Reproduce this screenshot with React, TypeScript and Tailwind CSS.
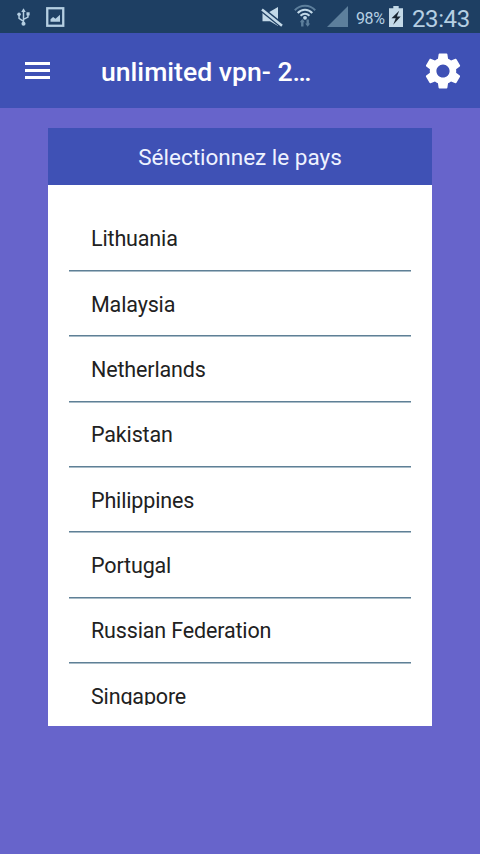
import { MdSettings } from "react-icons/md";

const countries = [
  "Lithuania",
  "Malaysia",
  "Netherlands",
  "Pakistan",
  "Philippines",
  "Portugal",
  "Russian Federation",
  "Singapore",
];

function UsbIcon() {
  return (
    <svg width="13" height="18" viewBox="0 0 14 19" fill="none" stroke="#b5cfe2" strokeWidth="1.6">
      <path d="M7 3v14M7 14.2 2.2 11V7M7 12l4.8-2.4V6" />
      <path d="M7 0 9.400 4H4.600z" fill="#b5cfe2" stroke="none" />
      <circle cx="2.2" cy="6.6" r="1.9" fill="#b5cfe2" stroke="none" />
      <path d="M10.2 4.4h3.4v3.4h-3.4z" fill="#b5cfe2" stroke="none" />
      <circle cx="7" cy="16.800" r="2.200" fill="#b5cfe2" stroke="none" />
    </svg>
  );
}

function PictureIcon() {
  return (
    <svg width="19" height="20" viewBox="0 0 19 20">
      <rect x="1.250" y="1.250" width="16" height="17.500" fill="none" stroke="#b5cfe2" strokeWidth="2.300" />
      <path d="M4.500 14.800v-2.600l2.600-2.200 2.400 1.800L14 7.800v7z" fill="#b5cfe2" />
    </svg>
  );
}

function MuteIcon() {
  return (
    <svg width="22" height="20" viewBox="0 0 22 20">
      <path d="M1.500 5.500h6L17 0v19l-8-4.800H1.500z" fill="#c3d9e8" />
      <path d="M0 1.700 21.500 19" stroke="#1e3f63" strokeWidth="5.200" />
      <path d="M1 2.500 21 18.800" stroke="#c3d9e8" strokeWidth="2.500" />
    </svg>
  );
}

function WifiIcon() {
  return (
    <svg width="22" height="23" viewBox="0 0 22 23" fill="none" strokeWidth="2">
      <path d="M.8 6.200C6.500.2 15.500.2 21.200 6.200" stroke="#5d7f9c" />
      <path d="M3.700 9C8 4.600 14 4.600 18.300 9" stroke="#c3d9e8" />
      <path d="M6.500 11.800c2.800-2.600 6.200-2.600 9 0" stroke="#c3d9e8" />
      <circle cx="11" cy="13.800" r="1.900" fill="#c3d9e8" />
      <path d="M8.300 22.500v-6M13.700 15.500v5" stroke="#5d7f9c" strokeWidth="2.400" />
      <path d="M5.800 18.300 8.300 15l2.500 3.300zM11.200 19.500h5l-2.500 3.300z" fill="#5d7f9c" />
    </svg>
  );
}

function BatteryIcon() {
  return (
    <svg width="14" height="21" viewBox="0 0 14 21">
      <path d="M4.300 0h5.400v2.300H14V21H0V2.300h4.300z" fill="#c3d9e8" />
      <path d="M10.200 4.800 2.500 12.200h4.200l-2.500 6.500 7.500-8.200H7.900z" fill="#182430" />
    </svg>
  );
}

function StatusBar() {
  return (
    <div className="flex h-[33px] items-start bg-[#1e3f63] text-[#b5cfe2]">
      <div className="flex pt-[7px] pl-[17px]">
        <div className="pt-[1px]">
          <UsbIcon />
        </div>
        <div className="ml-4">
          <PictureIcon />
        </div>
      </div>
      <div className="ml-auto flex pr-[10px]">
        <div className="pt-[7px]">
          <MuteIcon />
        </div>
        <div className="ml-[11px] pt-[4px]">
          <WifiIcon />
        </div>
        <svg className="mt-[6px] ml-[11px]" width="21" height="21" viewBox="0 0 21 21">
          <path d="M21 0v21H0z" fill="#5d7f9c" />
        </svg>
        <span className="mt-[10px] ml-2 w-[29px] text-[16px] leading-[18px] tracking-[-0.4px]">98%</span>
        <div className="mt-[6px] ml-[4px]">
          <BatteryIcon />
        </div>
        <span className="mt-[6px] ml-[9px] w-[58px] text-[24px] leading-[27px] tracking-[-0.4px]">23:43</span>
      </div>
    </div>
  );
}

function AppBar() {
  return (
    <header className="flex h-[75px] items-center bg-[#3f51b5] text-white">
      <button className="ml-[25px] flex w-[25px] flex-col gap-[4px]">
        <span className="h-[3px] bg-white" />
        <span className="h-[3px] bg-white" />
        <span className="h-[3px] bg-white" />
      </button>
      <h1 className="ml-[51px] pt-[2px] text-[26.6px] leading-8 font-medium whitespace-nowrap">unlimited vpn- 2…</h1>
      <button className="mr-[15px] ml-auto">
        <MdSettings size={44} />
      </button>
    </header>
  );
}

export default function App() {
  return (
    <div className="flex h-[854px] w-[480px] flex-col overflow-hidden bg-[#6764cb] font-['Roboto',sans-serif]">
      <StatusBar />
      <AppBar />
      <main className="mx-12 mt-5 h-[598px] bg-white">
        <h2 className="flex h-[57px] items-center justify-center bg-[#3f51b5] pt-[2px] text-[22.5px] text-[#eef2ff]">
          Sélectionnez le pays
        </h2>
        <ul className="mx-[21px] mt-[20px] h-[499.5px] overflow-hidden pt-[1px]">
          {countries.map((name) => (
            <li key={name} className="flex h-[65.35px] flex-col text-[21.5px] tracking-[-0.15px] text-[#212121]">
              <span className="flex grow items-center pt-[3px] pl-[22px]">{name}</span>
              <span className="h-px shrink-0 bg-[#5f8096]" />
              <span className="-mb-[0.5px] h-px shrink-0 bg-[#a9bcc8]" />
            </li>
          ))}
        </ul>
      </main>
    </div>
  );
}
